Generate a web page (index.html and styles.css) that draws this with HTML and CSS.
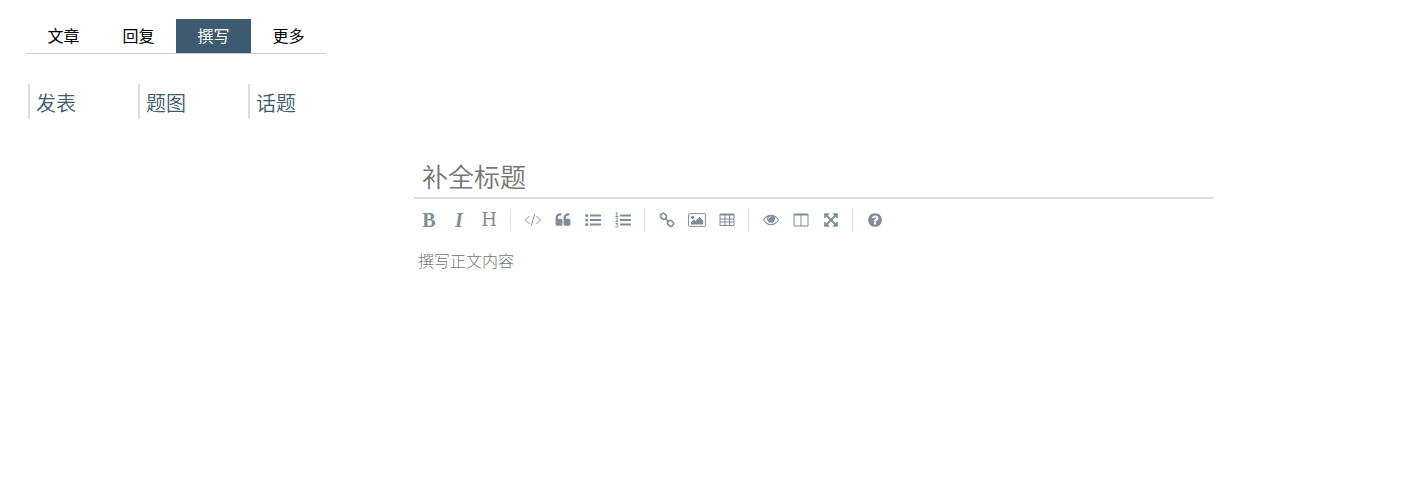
FILE: index.html
```html
<!DOCTYPE html>
<html lang="zh-CN">
<head>
<meta charset="utf-8">
<title>撰写</title>
<link rel="stylesheet" href="styles.css">
</head>
<body>
<header class="header">
  <nav class="tabs">
    <a class="tab" href="#articles">文章</a>
    <a class="tab" href="#replies">回复</a>
    <a class="tab tab-active" href="#write" aria-current="page">撰写</a>
    <a class="tab" href="#more">更多</a>
  </nav>
  <div class="actions">
    <button class="action" type="button">发表</button>
    <button class="action" type="button">题图</button>
    <button class="action" type="button">话题</button>
  </div>
</header>
<main class="editor">
  <input class="title" type="text" placeholder="补全标题" aria-label="标题">
  <div class="toolbar" role="toolbar" aria-label="格式">
    <button class="tool letter bold" type="button" aria-label="粗体">B</button>
    <button class="tool letter bold italic" type="button" aria-label="斜体">I</button>
    <button class="tool letter" type="button" aria-label="标题">H</button>
    <span class="separator"></span>
    <button class="tool" type="button" aria-label="代码"><svg class="icon wide" viewBox="0 0 18 16"><path class="line" d="M5.500 4 1.500 8l4 4M12.500 4l4 4-4 4M10.600 2.200 7.400 13.800"/></svg></button>
    <button class="tool" type="button" aria-label="引用"><svg class="icon" viewBox="0 0 1792 1792"><path d="M832 960v384q0 80-56 136t-136 56h-384q-80 0-136-56t-56-136v-704q0-104 40.500-198.500t109.500-163.500 163.500-109.500 198.500-40.500h64q26 0 45 19t19 45v128q0 26-19 45t-45 19h-64q-106 0-181 75t-75 181v32q0 40 28 68t68 28h224q80 0 136 56t56 136zm896 0v384q0 80-56 136t-136 56h-384q-80 0-136-56t-56-136v-704q0-104 40.500-198.500t109.500-163.500 163.500-109.500 198.500-40.500h64q26 0 45 19t19 45v128q0 26-19 45t-45 19h-64q-106 0-181 75t-75 181v32q0 40 28 68t68 28h224q80 0 136 56t56 136z"/></svg></button>
    <button class="tool" type="button" aria-label="无序列表"><svg class="icon" viewBox="0 0 16 16"><circle cx="1.700" cy="3.500" r="1.600"/><circle cx="1.700" cy="8" r="1.600"/><circle cx="1.700" cy="12.500" r="1.600"/><path d="M5 2.600h11v1.800H5zM5 7.100h11v1.800H5zM5 11.600h11v1.800H5z"/></svg></button>
    <button class="tool" type="button" aria-label="有序列表"><svg class="icon" viewBox="0 0 16 16"><path d="M5 2.600h11v1.800H5zM5 7.100h11v1.800H5zM5 11.600h11v1.800H5z"/><path class="line" d="M.7 1.300 1.900.5v4M.5 4.500h2.800M.6 6.700C1.300 5.600 3 6 2.800 7.200L.7 9.500h2.500M.6 11.500h2.200l-1.200 1.400c1.800-.2 1.800 2.200.1 2.200L.4 14.800"/></svg></button>
    <span class="separator"></span>
    <button class="tool" type="button" aria-label="链接"><svg class="icon" viewBox="0 0 16 16"><g class="thick"><rect x="-3" y="-2.500" width="6" height="5" rx="2.300" transform="translate(4.500 4.300) rotate(45)"/><rect x="-3" y="-2.500" width="6" height="5" rx="2.300" transform="translate(11.500 11.300) rotate(45)"/><path d="m6 6 4 4"/></g></svg></button>
    <button class="tool" type="button" aria-label="图片"><svg class="icon wide" viewBox="0 0 18 16"><rect class="line" x=".6" y="1.600" width="16.800" height="12.800" rx=".8"/><circle cx="4.600" cy="5.300" r="1.600"/><path d="M3 12.500V10l2.700-2.500L7.400 9l4-4.300 3.800 4v3.800z"/></svg></button>
    <button class="tool" type="button" aria-label="表格"><svg class="icon" viewBox="0 0 16 16"><path fill-rule="evenodd" d="M1.500 1.500h13q1 0 1 1v10.500q0 1-1 1h-13q-1 0-1-1V2.500q0-1 1-1zM1.500 3.500V6.500h4V3.500zm5 0V6.500h3.500V3.500zm4.500 0V6.500h3.500V3.500zM1.500 7.500V9.500h4V7.500zm5 0V9.500h3.500V7.500zm4.500 0V9.500h3.500V7.500zM1.500 10.500V13h4v-2.500zm5 0V13h3.500v-2.500zm4.500 0V13h3.500v-2.500z"/></svg></button>
    <span class="separator"></span>
    <button class="tool" type="button" aria-label="预览"><svg class="icon" viewBox="0 64 1792 1792"><path d="M1664 960q-152-236-381-353 61 104 61 225 0 185-131.500 316.500t-316.500 131.500-316.500-131.500-131.500-316.500q0-121 61-225-229 117-381 353 133 205 333.500 326.500t434.500 121.500 434.500-121.500 333.500-326.500zm-720-384q0-20-14-34t-34-14q-125 0-214.500 89.500t-89.500 214.500q0 20 14 34t34 14 34-14 14-34q0-86 61-147t147-61q20 0 34-14t14-34zm848 384q0 34-20 69-140 230-376.500 368.500t-499.500 138.500-499.500-139-376.500-368q-20-35-20-69t20-69q140-229 376.500-368t499.500-139 499.500 139 376.500 368q20 35 20 69z"/></svg></button>
    <button class="tool" type="button" aria-label="分栏"><svg class="icon" viewBox="0 0 16 16"><path fill-rule="evenodd" d="M1.500 1.500h13q1 0 1 1v11q0 1-1 1h-13q-1 0-1-1v-11q0-1 1-1zM1.500 3.500v10h6V3.500zm7 0v10h6V3.500z"/></svg></button>
    <button class="tool" type="button" aria-label="全屏"><svg class="icon" viewBox="0 0 1792 1792"><path d="M1411 541l-355 355 355 355 144-144q29-31 70-14 39 17 39 59v448q0 26-19 45t-45 19h-448q-42 0-59-40-17-39 14-69l144-144-355-355-355 355 144 144q31 30 14 69-17 40-59 40h-448q-26 0-45-19t-19-45v-448q0-42 40-59 39-17 69 14l144 144 355-355-355-355-144 144q-19 19-45 19-12 0-24-5-40-17-40-59v-448q0-26 19-45t45-19h448q42 0 59 40 17 39-14 69l-144 144 355 355 355-355-144-144q-31-30-14-69 17-40 59-40h448q26 0 45 19t19 45v448q0 42-39 59-13 5-25 5-26 0-45-19z"/></svg></button>
    <span class="separator"></span>
    <button class="tool" type="button" aria-label="帮助"><svg class="icon" viewBox="0 0 1792 1792"><path d="M1024 1376v-192q0-14-9-23t-23-9h-192q-14 0-23 9t-9 23v192q0 14 9 23t23 9h192q14 0 23-9t9-23zm256-672q0-88-55.500-163t-138.500-116-170-41q-243 0-371 213-15 24 8 42l132 100q7 6 19 6 16 0 25-12 53-68 86-92 34-24 86-24 48 0 85.500 26t37.500 59q0 38-20 61t-68 45q-63 28-115.500 86.500t-52.500 125.500v36q0 14 9 23t23 9h192q14 0 23-9t9-23q0-19 21.500-49.500t54.500-49.500q32-18 49-28.500t46-35 44.500-48 28-60.500 12.500-81zm384 192q0 209-103 385.500t-279.500 279.500-385.500 103-385.500-103-279.500-279.500-103-385.500 103-385.500 279.500-279.500 385.500-103 385.500 103 279.500 279.500 103 385.500z"/></svg></button>
  </div>
  <textarea class="content" placeholder="撰写正文内容" aria-label="正文"></textarea>
</main>
</body>
</html>
```
FILE: styles.css
```css
* {
  box-sizing: border-box;
}

body {
  margin: 0;
  background: #fff;
  color: #000;
  font: 16px/24px "Noto Sans CJK SC", sans-serif;
}

button,
input,
textarea {
  font-family: inherit;
  border: 0;
  background: none;
  border-radius: 0;
  outline: 0;
}

.header {
  padding: 19px 26px 0;
}

.tabs {
  display: flex;
  width: max-content;
  border-bottom: 1px solid #ccc;
}

.tab {
  width: 75px;
  padding-bottom: 2px;
  line-height: 32px;
  text-align: center;
  color: #000;
  text-decoration: none;
}

.tab-active {
  background: #3d5a70;
  color: #fff;
}

.actions {
  display: flex;
  gap: 10px;
  padding: 30px 2px 0;
}

.action {
  width: 100px;
  height: 35px;
  padding: 2px 6px 0;
  border-left: 2px solid #ddd;
  color: #3d5a70;
  font-size: 20px;
  font-weight: 350;
  line-height: 33px;
  text-align: left;
}

.editor {
  max-width: 1214px;
  padding: 38px 0 0 414px;
}

.title {
  display: block;
  width: 100%;
  height: 42px;
  padding: 0 8px 4px;
  border-bottom: 2px solid #ddd;
  font-size: 26px;
  font-weight: 350;
}

.title::placeholder,
.content::placeholder {
  color: #757575;
  opacity: 1;
}

.toolbar {
  display: flex;
  align-items: center;
  padding-top: 9px;
}

.tool {
  display: flex;
  align-items: center;
  justify-content: center;
  width: 30px;
  height: 24px;
  padding: 0 0 1px;
  color: #7f8c99;
}

.letter {
  font: 18px/22px "DejaVu Serif", serif;
}

.bold {
  font: bold 20px/22px "Liberation Serif", serif;
}

.italic {
  font-style: italic;
}

.separator {
  width: 1px;
  height: 22px;
  margin: 0 7px 0 6px;
  background: #ddd;
}

.icon {
  width: 16px;
  height: 16px;
  fill: currentColor;
}

.wide {
  width: 18px;
}

.line,
.thick {
  fill: none;
  stroke: currentColor;
}

.thick {
  stroke-width: 1.6;
}

.content {
  display: block;
  width: 100%;
  height: 200px;
  margin-top: 12px;
  padding: 4px;
  resize: none;
  font-size: 16px;
  font-weight: 300;
  line-height: 24px;
}
```
